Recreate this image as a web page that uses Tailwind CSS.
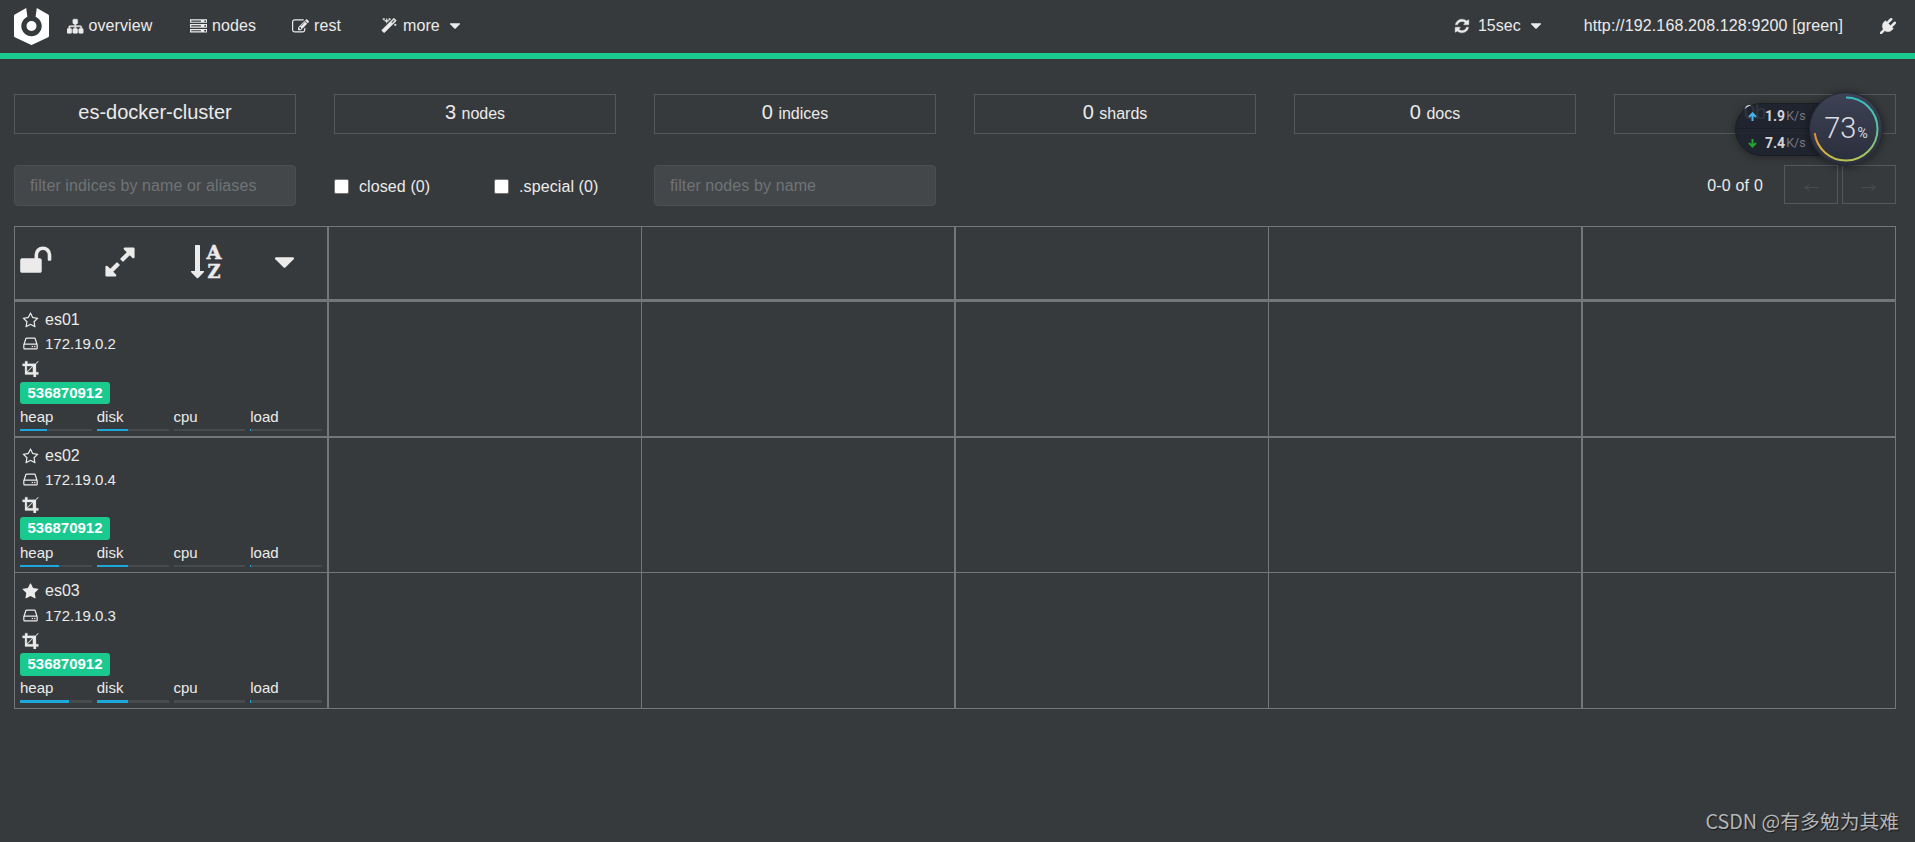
<!DOCTYPE html>
<html lang="en">
<head>
<meta charset="utf-8">
<title>cerebro</title>
<script src="https://cdn.jsdelivr.net/npm/@tailwindcss/browser@4"></script>
</head>
<body class="relative h-[842px] w-[1915px] overflow-hidden bg-[#373a3c] font-['Liberation_Sans',Arial,sans-serif] text-[16px] leading-6 text-[#ebebeb]">
<svg class="hidden">
  <symbol id="sitemap" viewBox="0 0 1792 1792"><path d="M1792 1248v320q0 40-28 68t-68 28h-320q-40 0-68-28t-28-68v-320q0-40 28-68t68-28h96v-192h-512v192h96q40 0 68 28t28 68v320q0 40-28 68t-68 28h-320q-40 0-68-28t-28-68v-320q0-40 28-68t68-28h96v-192h-512v192h96q40 0 68 28t28 68v320q0 40-28 68t-68 28h-320q-40 0-68-28t-28-68v-320q0-40 28-68t68-28h96v-192q0-52 38-90t90-38h512v-192h-96q-40 0-68-28t-28-68v-320q0-40 28-68t68-28h320q40 0 68 28t28 68v320q0 40-28 68t-68 28h-96v192h512q52 0 90 38t38 90v192h96q40 0 68 28t28 68z"/></symbol>
  <symbol id="server" viewBox="0 0 1792 1792"><path d="M128 1408h1024v-128h-1024v128zm0-512h1024v-128h-1024v128zm1568 448q0-40-28-68t-68-28-68 28-28 68 28 68 68 28 68-28 28-68zm-1568-960h1024v-128h-1024v128zm1568 448q0-40-28-68t-68-28-68 28-28 68 28 68 68 28 68-28 28-68zm0-512q0-40-28-68t-68-28-68 28-28 68 28 68 68 28 68-28 28-68zm96 832v384h-1792v-384h1792zm0-512v384h-1792v-384h1792zm0-512v384h-1792v-384h1792z"/></symbol>
  <symbol id="edit" viewBox="0 0 1792 1792"><path d="M888 1184l116-116-152-152-116 116v56h96v96h56zm440-720q-16-16-33 1l-350 350q-17 17-1 33t33-1l350-350q17-17 1-33zm80 594v190q0 119-84.5 203.5t-203.5 84.5h-832q-119 0-203.5-84.5t-84.5-203.5v-832q0-119 84.5-203.5t203.5-84.5h832q63 0 117 25 15 7 18 23 3 17-9 29l-49 49q-14 14-32 8-23-6-45-6h-832q-66 0-113 47t-47 113v832q0 66 47 113t113 47h832q66 0 113-47t47-113v-126q0-13 9-22l64-64q15-15 35-7t20 29zm-96-738l288 288-672 672h-288v-288zm444 132l-92 92-288-288 92-92q28-28 68-28t68 28l152 152q28 28 28 68t-28 68z"/></symbol>
  <symbol id="magic" viewBox="0 0 1792 1792"><path d="M1254 581l293-293-107-107-293 293zm447-293q0 27-18 45l-1286 1286q-18 18-45 18t-45-18l-198-198q-18-18-18-45t18-45l1286-1286q18-18 45-18t45 18l198 198q18 18 18 45zm-1351-190l98 30-98 30-30 98-30-98-98-30 98-30 30-98zm350 162l196 60-196 60-60 196-60-196-196-60 196-60 60-196zm930 478l98 30-98 30-30 98-30-98-98-30 98-30 30-98zm-640-640l98 30-98 30-30 98-30-98-98-30 98-30 30-98z"/></symbol>
  <symbol id="refresh" viewBox="0 0 1792 1792"><path d="M1639 1056q0 5-1 7-64 268-268 434.5t-478 166.5q-146 0-282.5-55t-243.5-157l-129 129q-19 19-45 19t-45-19-19-45v-448q0-26 19-45t45-19h448q26 0 45 19t19 45-19 45l-137 137q71 66 161 102t187 36q134 0 250-65t186-179q11-17 53-117 8-23 30-23h192q13 0 22.5 9.5t9.5 22.5zm25-800v448q0 26-19 45t-45 19h-448q-26 0-45-19t-19-45 19-45l138-138q-148-137-349-137-134 0-250 65t-186 179q-11 17-53 117-8 23-30 23h-199q-13 0-22.5-9.5t-9.5-22.5v-7q65-268 270-434.5t480-166.5q146 0 284 55.5t245 156.5l130-129q19-19 45-19t45 19 19 45z"/></symbol>
  <symbol id="plug" viewBox="0 0 1792 1792"><path d="M1755 453q37 38 37 90.5t-37 90.5l-401 400 150 150-160 160q-163 163-389.5 186.5t-411.5-100.5l-362 362h-181v-181l362-362q-124-185-100.5-411.5t186.5-389.5l160-160 150 150 400-401q38-37 91-37t90 37 37 90.5-37 90.5l-400 401 234 234 401-400q38-37 91-37t90 37z"/></symbol>
  <symbol id="star" viewBox="0 0 1792 1792"><path d="M1728 647q0 22-26 48l-363 354 86 500q1 7 1 20 0 21-10.5 35.5t-30.5 14.5q-19 0-40-12l-449-236-449 236q-22 12-40 12-21 0-31.5-14.5t-10.5-35.5q0-6 2-20l86-500-364-354q-25-27-25-48 0-37 56-46l502-73 225-455q19-41 49-41t49 41l225 455 502 73q56 9 56 46z"/></symbol>
  <symbol id="star-o" viewBox="0 0 1792 1792"><path d="M1201 1004l306-297-422-62-189-382-189 382-422 62 306 297-73 421 378-199 377 199zm527-357q0 22-26 48l-363 354 86 500q1 7 1 20 0 50-41 50-19 0-40-12l-449-236-449 236q-22 12-40 12-21 0-31.5-14.5t-10.5-35.5q0-6 2-20l86-500-364-354q-25-27-25-48 0-37 56-46l502-73 225-455q19-41 49-41t49 41l225 455 502 73q56 9 56 46z"/></symbol>
  <symbol id="hdd" viewBox="0 0 1792 1792"><path d="M1168 1216q0 33-23.5 56.5t-56.5 23.5-56.5-23.5-23.5-56.5 23.5-56.5 56.5-23.5 56.5 23.5 23.5 56.5zm256 0q0 33-23.5 56.5t-56.5 23.5-56.5-23.5-23.5-56.5 23.5-56.5 56.5-23.5 56.5 23.5 23.5 56.5zm112 160v-320q0-13-9.5-22.5t-22.5-9.5h-1216q-13 0-22.5 9.5t-9.5 22.5v320q0 13 9.5 22.5t22.5 9.5h1216q13 0 22.5-9.5t9.5-22.5zm-1230-480h1180l-157-482q-4-13-16-21.5t-26-8.5h-782q-14 0-26 8.5t-16 21.5zm1358 160v320q0 66-47 113t-113 47h-1216q-66 0-113-47t-47-113v-320q0-25 16-75l197-606q17-53 63-86t101-33h782q55 0 101 33t63 86l197 606q16 50 16 75z"/></symbol>
  <symbol id="crop" viewBox="0 0 1792 1792"><path d="M557 1280h595v-595zm-45-45l595-595h-595v595zm1216 77v192q0 14-9 23t-23 9h-224v224q0 14-9 23t-23 9h-192q-14 0-23-9t-9-23v-224h-864q-14 0-23-9t-9-23v-864h-224q-14 0-23-9t-9-23v-192q0-14 9-23t23-9h224v-224q0-14 9-23t23-9h192q14 0 23 9t9 23v224h851l246-247q10-9 23-9t23 9q9 10 9 23t-9 23l-247 246v851h224q14 0 23 9t9 23z"/></symbol>
  <symbol id="unlock" viewBox="0 0 1792 1792"><path d="M1728 576v256q0 26-19 45t-45 19h-64q-26 0-45-19t-19-45v-256q0-106-75-181t-181-75-181 75-75 181v192h96q40 0 68 28t28 68v576q0 40-28 68t-68 28h-960q-40 0-68-28t-28-68v-576q0-40 28-68t68-28h672v-192q0-185 131.5-316.5t316.5-131.5 316.5 131.5 131.5 316.5z"/></symbol>
  <symbol id="expand" viewBox="0 0 1792 1792"><path d="M883 1056q0 13-10 23l-332 332 144 144q19 19 19 45t-19 45-45 19h-448q-26 0-45-19t-19-45v-448q0-26 19-45t45-19 45 19l144 144 332-332q10-10 23-10t23 10l114 114q10 10 10 23zm781-864v448q0 26-19 45t-45 19-45-19l-144-144-332 332q-10 10-23 10t-23-10l-114-114q-10-10-10-23t10-23l332-332-144-144q-19-19-19-45t19-45 45-19h448q26 0 45 19t19 45z"/></symbol>
  <symbol id="caret" viewBox="384 640 1024 576"><path d="M1408 704q0 26-19 45l-448 448q-19 19-45 19t-45-19l-448-448q-19-19-19-45t19-45 45-19h896q26 0 45 19t19 45z"/></symbol>
</svg>

<nav class="flex h-[59px] items-start border-b-6 border-[#1ac98e] pt-[8px] pl-[14px]">
  <svg class="h-[37px] w-[35px] shrink-0" viewBox="0 0 35 37" fill="#fff">
    <path d="M12.2 0 L0.8 6.6 Q0 7.1 0 8 V27.8 Q0 28.8 0.8 29.3 L16.3 36.6 Q17.5 37.2 18.7 36.6 L34.2 29.3 Q35 28.8 35 27.8 V8 Q35 7.1 34.2 6.6 L22.8 0 L21.6 8.7 A10.2 10.2 0 1 1 13.4 8.7 Z"/>
    <circle cx="17.5" cy="18" r="5"/>
  </svg>
  <div class="flex h-[35px] items-center tracking-[0.1px]">
    <a class="ml-[18px] flex w-[122px] items-center pt-px"><svg class="mr-[5px] size-[16.500px] stroke-current stroke-[60]" fill="currentColor"><use href="#sitemap"/></svg>overview</a>
    <a class="ml-px flex w-[102px] items-center pt-px"><svg class="mr-[5px] size-[17px]" fill="currentColor"><use href="#server"/></svg>nodes</a>
    <a class="flex w-[89px] items-center pt-px"><svg class="mr-[5px] size-[17px]" fill="currentColor"><use href="#edit"/></svg>rest</a>
    <a class="flex items-center pt-px"><svg class="mr-[6px] size-[16px] stroke-current stroke-[60]" fill="currentColor"><use href="#magic"/></svg>more<svg class="ml-[10px] h-[6px] w-[10px]" fill="currentColor"><use href="#caret"/></svg></a>
  </div>
  <div class="mr-[19px] ml-auto flex h-[35px] items-center">
    <a class="flex items-center pt-px"><svg class="mr-[8px] size-[16px] stroke-current stroke-[40]" fill="currentColor"><use href="#refresh"/></svg>15sec<svg class="ml-[10px] h-[6px] w-[10px]" fill="currentColor"><use href="#caret"/></svg></a>
    <a class="ml-[43px] pt-px tracking-[0.14px]">http://192.168.208.128:9200 [green]</a>
    <svg class="ml-[37px] size-[16px] stroke-current stroke-[40]" fill="currentColor"><use href="#plug"/></svg>
  </div>
</nav>

<main class="px-[14px] pt-[35px]">
  <section class="grid w-[1882px] grid-cols-6 gap-x-[38px] text-center leading-[34px]">
    <div class="h-[40px] border border-[#55595c]"><span class="text-[20px]">es-docker-cluster</span></div>
    <div class="h-[40px] border border-[#55595c]"><span class="mr-px text-[20px]">3</span> nodes</div>
    <div class="h-[40px] border border-[#55595c]"><span class="mr-px text-[20px]">0</span> indices</div>
    <div class="h-[40px] border border-[#55595c]"><span class="mr-px text-[20px]">0</span> shards</div>
    <div class="h-[40px] border border-[#55595c]"><span class="mr-px text-[20px]">0</span> docs</div>
    <div class="h-[40px] border border-[#55595c]"><span class="text-[20px]">0b</span></div>
  </section>

  <section class="mt-[31px] flex h-[41px] w-[1882px] items-start tracking-[0.1px]">
    <input class="h-[41px] w-[282px] rounded-[4px] border border-[#4b4f52] bg-[#434749] px-[15px] placeholder:text-[#6f7477]" placeholder="filter indices by name or aliases">
    <label class="ml-[38px] flex h-[43px] w-[160px] items-center"><span class="mr-[10px] size-[15px] rounded-[2px] border border-[#767676] bg-white"></span>closed (0)</label>
    <label class="flex h-[43px] w-[160px] items-center"><span class="mr-[10px] size-[15px] rounded-[2px] border border-[#767676] bg-white"></span>.special (0)</label>
    <input class="h-[41px] w-[282px] rounded-[4px] border border-[#4b4f52] bg-[#434749] px-[15px] placeholder:text-[#6f7477]" placeholder="filter nodes by name">
    <div class="ml-auto flex leading-[41px]">
      <span class="mr-[21px] tracking-[0.2px]">0-0 of 0</span>
      <svg class="mr-[4px] h-[39px] w-[54px] border border-[#55595c]" fill="none" stroke="#484c4f" viewBox="0 0 52 37"><path d="M33 21.500H20M24 18q-1 2.500-4.500 3.500q3.500 1 4.500 3.500"/></svg>
      <svg class="h-[39px] w-[54px] border border-[#55595c]" fill="none" stroke="#484c4f" viewBox="0 0 52 37"><path d="M19 21.500H32M28.500 18q1 2.500 4.500 3.500q-3.500 1-4.500 3.500"/></svg>
    </div>
  </section>

  <section id="grid" class="mt-[20px] w-[1882px] border-t border-l border-[#73777a]">
    <div class="grid h-[75px] grid-cols-[314px_313px_314px_313px_314px_313px] border-b-3 border-[#73777a]">
      <div class="flex items-center border-r-2 border-[#73777a] pb-[2px] pl-[4px]">
        <svg class="mb-[2px] size-[33.500px]" fill="currentColor"><use href="#unlock"/></svg>
        <svg class="ml-[50px] size-[34px]" fill="currentColor"><use href="#expand"/></svg>
        <svg class="ml-[53px] h-[36px] w-[32px] overflow-visible" viewBox="0 0 32 36" fill="currentColor">
          <path d="M5 1.500Q5 1 5.500 1H9.500Q10 1 10 1.500V27H13.500Q14.500 27.300 13.800 28.200L8.200 34Q7.500 34.600 6.800 34L1.200 28.200Q.5 27.300 1.500 27H5Z"/>
          <g font-family="DejaVu Serif" font-weight="bold" font-size="19" stroke="currentColor" stroke-width=".5">
            <text x="16.500" y="15" textLength="15" lengthAdjust="spacingAndGlyphs">A</text>
            <text x="17.500" y="34" textLength="13" lengthAdjust="spacingAndGlyphs">Z</text>
          </g>
        </svg>
        <svg class="ml-[53px] h-[11px] w-[19px]" fill="currentColor"><use href="#caret"/></svg>
      </div>
      <div class="border-r border-[#73777a]"></div><div class="border-r-2 border-[#73777a]"></div><div class="border-r border-[#73777a]"></div><div class="border-r-2 border-[#73777a]"></div><div class="border-r border-[#73777a]"></div>
    </div>
  </section>
</main>

<template id="node">
  <div class="grid grid-cols-[314px_313px_314px_313px_314px_313px] border-[#73777a]">
    <div class="border-r-2 border-[#73777a] pt-[6px] pl-[5px]">
      <div data-title class="flex h-[24px] items-center pl-[2px]"><svg class="mr-[6px] size-[17px]" fill="currentColor"><use data-star href="#star-o"/></svg><span data-name></span></div>
      <div class="flex h-[25px] items-center pl-[2px] text-[15px]"><svg class="mr-[6px] size-[17px]" fill="currentColor"><use href="#hdd"/></svg><span data-ip></span></div>
      <div data-roles class="flex h-[24px] items-center pl-[2px]"><svg class="size-[17px] stroke-current stroke-[30]" fill="currentColor"><use href="#crop"/></svg></div>
      <div class="flex"><span data-badge class="w-[90px] rounded-[3px] bg-[#1ac98e] text-center text-[15px] leading-[21px] font-bold text-white">536870912</span></div>
      <div class="grid w-[302px] grid-cols-4 gap-x-[5px] text-[15px] leading-[24px]">
        <div>heap<div data-bar class="h-[2px] bg-[#484b4d]"><div data-heap class="h-full bg-[#1ca8dd]"></div></div></div>
        <div>disk<div data-bar class="h-[2px] bg-[#484b4d]"><div class="h-full w-[43%] bg-[#1ca8dd]"></div></div></div>
        <div>cpu<div data-bar class="h-[2px] bg-[#484b4d]"></div></div>
        <div>load<div data-bar class="h-[2px] bg-[#484b4d]"><div class="h-full w-px bg-[#1ca8dd]"></div></div></div>
      </div>
    </div>
    <div class="border-r border-[#73777a]"></div><div class="border-r-2 border-[#73777a]"></div><div class="border-r border-[#73777a]"></div><div class="border-r-2 border-[#73777a]"></div><div class="border-r border-[#73777a]"></div>
  </div>
</template>
<script>
  const nodes = [
    { name: 'es01', ip: '172.19.0.2', heap: 37.5, row: ['h-[136px]', 'border-b-2'], title: 'mb-[-1px]', roles: 'mb-[1px]', badge: ['mt-[1px]', 'mb-[1px]', 'h-[22px]'], bar: 'h-[2px]' },
    { name: 'es02', ip: '172.19.0.4', heap: 54, row: ['h-[135px]', 'border-b'], title: 'mb-[-1px]', roles: 'mb-[1px]', badge: ['h-[23px]', 'mb-[1px]'], bar: 'h-[2px]' },
    { name: 'es03', ip: '172.19.0.3', heap: 68, master: true, row: ['h-[136px]', 'border-b'], title: 'mb-0', roles: 'mb-0', badge: ['mt-[1px]', 'h-[23px]'], bar: 'h-[3px]' }
  ];
  for (const n of nodes) {
    const row = document.getElementById('node').content.firstElementChild.cloneNode(true);
    row.classList.add(...n.row);
    row.querySelector('[data-title]').classList.add(n.title);
    row.querySelector('[data-roles]').classList.add(n.roles);
    row.querySelector('[data-name]').textContent = n.name;
    row.querySelector('[data-ip]').textContent = n.ip;
    row.querySelector('[data-badge]').classList.add(...n.badge);
    if (n.master) row.querySelector('[data-star]').setAttribute('href', '#star');
    row.querySelectorAll('[data-bar]').forEach(b => b.classList.replace('h-[2px]', n.bar));
    row.querySelector('[data-heap]').style.width = n.heap + '%';
    document.getElementById('grid').append(row);
  }
</script>

<!-- network speed widget floating above the page -->
<div class="absolute top-[103px] left-[1735px] h-[53px] w-[110px] rounded-full border border-[#1b1c26] bg-[#1e222c]/90 font-[Roboto,sans-serif] shadow-[0_1px_8px_rgba(0,0,0,.35)]">
  <div class="flex h-[25px] items-center border-b border-[#1b1d28] pl-[12px] text-[14px] font-bold text-[#d4d5d8]"><svg class="mr-[8px] size-[9px]" viewBox="0 0 9 9" fill="none" stroke="#45b5ee" stroke-width="2"><path d="M4.500 9V2M1 5L4.500 1.500L8 5"/></svg>1.9<span class="ml-px text-[12.500px] font-normal text-[#777a82]">K/s</span></div>
  <div class="flex h-[28px] items-center pl-[12px] text-[14px] font-bold text-[#d4d5d8]"><svg class="mr-[8px] size-[9px]" viewBox="0 0 9 9" fill="none" stroke="#21a32d" stroke-width="2"><path d="M4.500 0V7M1 4L4.500 7.500L8 4"/></svg>7.4<span class="ml-px text-[12.500px] font-normal text-[#777a82]">K/s</span></div>
</div>
<div class="absolute top-[92px] left-[1809px] size-[74px] rounded-full border border-[#232530] bg-linear-to-b from-[#3d4355] to-[#2a2d3b] font-[Roboto,sans-serif] shadow-[0_1px_8px_rgba(0,0,0,.45)]">
  <svg class="absolute inset-0 size-full" viewBox="0 0 72 72" fill="none" stroke-width="2">
    <defs>
      <linearGradient id="ringA" x1="0" y1="0" x2="0" y2="1"><stop offset="0" stop-color="#35bfc4"/><stop offset=".5" stop-color="#5cc49a"/><stop offset="1" stop-color="#b5c253"/></linearGradient>
      <linearGradient id="ringB" x1="1" y1="1" x2="0" y2="0"><stop offset="0" stop-color="#b5c253"/><stop offset=".6" stop-color="#d9b23c"/><stop offset="1" stop-color="#df8a3c"/></linearGradient>
    </defs>
    <path stroke="url(#ringA)" d="M36 4.500A31.500 31.500 0 0 1 36 67.500"/>
    <path stroke="url(#ringB)" d="M36 67.500A31.500 31.500 0 0 1 4.700 40"/>
  </svg>
  <div class="flex h-full items-baseline justify-center pt-[15px] text-[29px] leading-[40px] font-light text-[#dcdde1]">73<span class="ml-px text-[14px] font-normal">%</span></div>
</div>

<div class="absolute top-[806px] right-[16px] font-['Noto_Sans_CJK_SC',sans-serif] text-[19.800px] leading-[30px] font-normal whitespace-nowrap text-[#b4b6b7] [text-shadow:1px_1px_1px_rgba(0,0,0,.6)]">CSDN @有多勉为其难</div>
</body>
</html>
